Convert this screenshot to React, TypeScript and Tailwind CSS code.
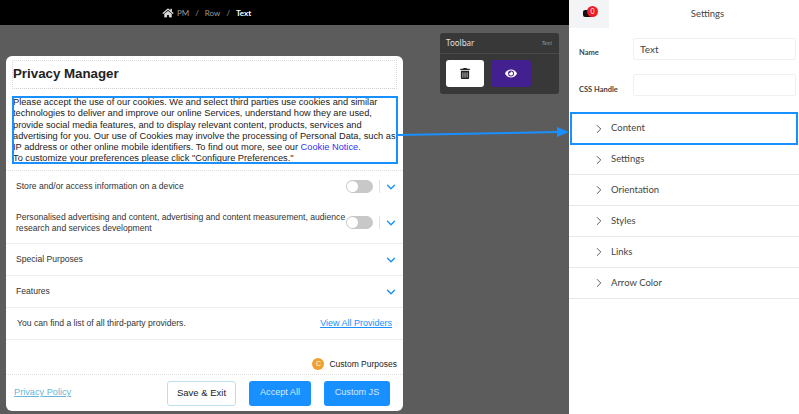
import { ChevronDown, ChevronRight } from "lucide-react";
import { FaEye, FaHome, FaTrashAlt } from "react-icons/fa";

const purposes = [
  { label: "Store and/or access information on a device", toggle: true, rowClass: "h-[31px]" },
  {
    label: "Personalised advertising and content, advertising and content measurement, audience research and services development",
    toggle: true,
    rowClass: "h-[42px] border-b border-[#eeeeee]",
  },
  { label: "Special Purposes", toggle: false, rowClass: "h-[32px] border-b border-[#eeeeee]" },
  { label: "Features", toggle: false, rowClass: "h-[32px] border-b border-[#eeeeee]" },
];

const sections = ["Settings", "Orientation", "Styles", "Links", "Arrow Color"];

function Toggle() {
  return (
    <span className="flex h-[13px] w-[27px] items-center rounded-full bg-[#c8c8c8] pl-px">
      <span className="h-[11px] w-[11px] rounded-full bg-white" />
    </span>
  );
}

function PurposeRow({ label, toggle, rowClass }: { label: string; toggle: boolean; rowClass: string }) {
  return (
    <div className={`flex items-center pl-[10px] pr-[5px] ${rowClass}`}>
      <p className="w-[330px] text-[8.6px] leading-[11px] text-[#333333]">{label}</p>
      {toggle && <Toggle />}
      {toggle && <span className="ml-[6px] h-[13px] w-px bg-[#e3e3e3]" />}
      <ChevronDown className="ml-auto h-[14px] w-[14px] text-[#1890ff]" strokeWidth={2.4} />
    </div>
  );
}

function Modal() {
  return (
    <div className="flex h-[355px] w-[397px] flex-col overflow-hidden rounded-[6px] bg-white font-['Liberation_Sans',sans-serif]">
      <div className="flex h-[34px] flex-col px-[6px] pt-[4px]">
        <div className="flex h-[29px] items-center border border-dotted border-b-[#cfcfcf] border-l-[#d8d8d8] border-r-[#d8d8d8] border-t-[#d8d8d8] pb-[1px]">
          <h1 className="text-[13.3px] font-bold leading-none text-[#222222]">Privacy Manager</h1>
        </div>
      </div>
      <div className="px-[6px] pt-[6px]">
        <div className="h-[68px] w-[386px] overflow-hidden border-2 border-[#1890ff] text-[9.25px] leading-[11.3px] text-[#222222]">
          <p className="ml-[-1px] mt-[-1px] whitespace-nowrap">
            Please accept the use of our cookies. We and select third parties use cookies and similar
            <br />
            technologies to deliver and improve our online Services, understand how they are used,
            <br />
            provide social media features, and to display relevant content, products, services and
            <br />
            advertising for you. Our use of Cookies may involve the processing of Personal Data, such as
            <br />
            IP address or other online mobile identifiers. To find out more, see our{" "}
            <span className="text-[#2b35f0]">Cookie Notice.</span>
            <br />
            To customize your preferences please click "Configure Preferences."
          </p>
        </div>
      </div>
      <div className="mt-[6px] border-t border-dotted border-[#dddddd]" />
      {purposes.map((row) => (
        <PurposeRow key={row.label} {...row} />
      ))}
      <div className="flex h-[32px] items-center border-b border-[#eeeeee] px-[11px]">
        <p className="text-[8.6px] text-[#333333]">You can find a list of all third-party providers.</p>
        <a className="ml-auto text-[9px] text-[#1890ff] underline">View All Providers</a>
      </div>
      <div className="flex h-[35px] items-end justify-end border-b border-dotted border-[#dddddd] pb-[4px] pr-[6px]">
        <span className="flex h-[12px] w-[12px] items-center justify-center rounded-full bg-[#f0a030] text-[7px] text-white">
          C
        </span>
        <span className="ml-[5px] text-[8.5px] leading-[12px] text-[#222222]">Custom Purposes</span>
      </div>
      <div className="flex flex-1 items-center pl-[8px] pr-[13px]">
        <a className="text-[9.2px] text-[#69b7d6] underline">Privacy Policy</a>
        <button className="ml-auto h-[25px] w-[69px] rounded-[3px] border border-[#bcdff0] text-[9.5px] text-[#222222]">
          Save &amp; Exit
        </button>
        <button className="ml-[13px] h-[25px] w-[62px] rounded-[3px] bg-[#1890ff] text-[9.1px] text-[#d6ebff]">
          Accept All
        </button>
        <button className="ml-[13px] h-[25px] w-[66px] rounded-[3px] bg-[#1890ff] text-[9.1px] text-[#d6ebff]">
          Custom JS
        </button>
      </div>
    </div>
  );
}

function Toolbar() {
  return (
    <div className="mt-[-23px] h-[61px] w-[119px] rounded-[3px] bg-[#383838]">
      <div className="flex h-[21px] items-center justify-between border-b border-[#4a4a4a] pl-[6px] pr-[7px]">
        <span className="text-[8px] text-[#e0e0e0]">Toolbar</span>
        <span className="text-[6px] italic text-[#9a9a9a]">Text</span>
      </div>
      <div className="flex gap-[7px] pl-[6px] pt-[6px]">
        <button className="flex h-[27px] w-[38px] items-center justify-center rounded-[3px] bg-white">
          <FaTrashAlt className="h-[11px] w-[10px] text-[#222222]" />
        </button>
        <button className="flex h-[27px] w-[40px] items-center justify-center rounded-[3px] bg-[#42208f]">
          <FaEye className="h-[11px] w-[12px] text-white" />
        </button>
      </div>
    </div>
  );
}

function SettingsPanel() {
  return (
    <aside className="flex w-[230px] flex-col bg-white font-['Lato',sans-serif] text-[#444444]">
      <div className="flex h-[28px]">
        <div className="relative h-[28px] w-[40px] bg-[#f3f4f6]">
          <span className="absolute left-[14px] top-[10px] h-[7px] w-[10px] rounded-[2px] bg-[#111111]" />
          <span className="absolute left-[18px] top-[6px] flex h-[11px] w-[11px] items-center justify-center rounded-full bg-[#ee1c25] text-[7px] leading-none text-white">
            0
          </span>
        </div>
        <div className="flex flex-1 items-center justify-center pl-[7px] text-[9.5px]">Settings</div>
      </div>
      <div className="flex flex-col gap-[14px] pl-[10px] pr-[3px] pt-[10px]">
        <label className="flex items-center">
          <span className="mt-[8px] w-[54px] text-[7.5px] font-bold">Name</span>
          <span className="flex h-[22px] flex-1 items-center rounded-[2px] border border-[#f0f0f0] pl-[6px] text-[10px]">
            Text
          </span>
        </label>
        <label className="flex items-center">
          <span className="mt-[10px] w-[54px] text-[7.5px] font-bold">CSS Handle</span>
          <span className="h-[22px] flex-1 rounded-[2px] border border-[#f0f0f0]" />
        </label>
      </div>
      <div className="ml-[1px] mr-px mt-[16px] flex h-[33px] items-center border-2 border-[#1890ff] pl-[20px] text-[9.5px]">
        <ChevronRight className="h-[14px] w-[14px]" strokeWidth={1.5} />
        <span className="ml-[5px]">Content</span>
      </div>
      {sections.map((name, i) => (
        <div
          key={name}
          className={`flex shrink-0 items-center border-b border-[#e8e8e8] pl-[23px] text-[9.5px] ${i === 0 ? "h-[30px]" : "h-[31px]"}`}
        >
          <ChevronRight className="h-[14px] w-[14px]" strokeWidth={1.5} />
          <span className="ml-[5px]">{name}</span>
        </div>
      ))}
    </aside>
  );
}

function ConnectorArrow() {
  return (
    <svg className="absolute left-[398px] top-[124px]" width="172" height="18" viewBox="0 0 172 18">
      <path d="M0 11 L160 8" stroke="#1890ff" strokeWidth="2" fill="none" />
      <path d="M159 3 L171 8 L159 13 Z" fill="#1890ff" />
    </svg>
  );
}

export default function App() {
  return (
    <div className="relative flex h-[414px] w-[799px] overflow-hidden">
      <main className="flex w-[569px] flex-col bg-[#5c5c5c]">
        <div className="flex h-[25px] items-center gap-[6px] bg-black pl-[162px] font-['Lato',sans-serif] text-[8px] text-[#9a9a9a]">
          <FaHome className="mr-[-3px] h-[10px] w-[12px] text-[#d8d8d8]" />
          <span>PM</span>
          <span>/</span>
          <span>Row</span>
          <span>/</span>
          <span className="font-bold text-white">Text</span>
        </div>
        <div className="flex items-start gap-[37px] pl-[6px] pt-[31px]">
          <Modal />
          <Toolbar />
        </div>
      </main>
      <SettingsPanel />
      <ConnectorArrow />
    </div>
  );
}
